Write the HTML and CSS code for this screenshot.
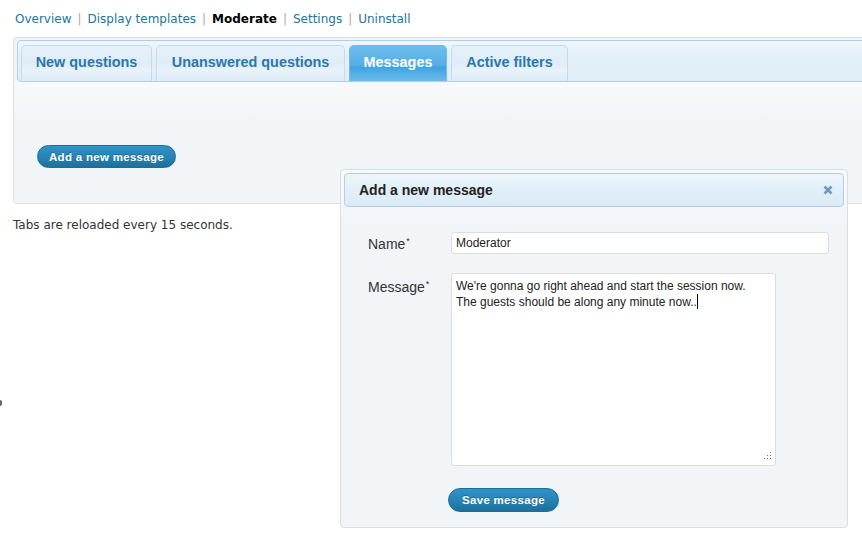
FILE: index.html
```html
<!DOCTYPE html>
<html>
<head>
<meta charset="utf-8">
<link rel="stylesheet" href="styles.css">
</head>
<body>
<div class="page">
  <nav class="subnav">
    <a href="#">Overview</a><span class="sep">|</span><a href="#">Display templates</a><span class="sep">|</span><strong>Moderate</strong><span class="sep">|</span><a href="#">Settings</a><span class="sep">|</span><a href="#">Uninstall</a>
  </nav>
  <div class="tabs">
    <ul class="tab-nav">
      <li class="tab tab-new">New questions</li>
      <li class="tab tab-unanswered">Unanswered questions</li>
      <li class="tab tab-messages active">Messages</li>
      <li class="tab tab-filters">Active filters</li>
    </ul>
    <div class="tab-panel">
      <button class="btn btn-add">Add a new message</button>
    </div>
  </div>
  <p class="note">Tabs are reloaded every 15 seconds.</p>
</div>

<span class="edge-dot"></span>

<div class="dialog">
  <div class="dialog-title">
    <span>Add a new message</span>
    <svg class="close" width="10" height="10" viewBox="0 0 10 10"><path d="M1.5 1.5 L8.5 8.5 M8.5 1.5 L1.5 8.5" stroke="#6d9bc3" stroke-width="2.6" stroke-linecap="butt"/></svg>
  </div>
  <div class="dialog-body">
    <div class="row">
      <label class="label">Name<sup>*</sup></label>
      <div class="input">Moderator</div>
    </div>
    <div class="row">
      <label class="label label-msg">Message<sup>*</sup></label>
      <div class="textarea">We're gonna go right ahead and start the session now.<br>The guests should be along any minute now..<span class="caret"></span>
        <svg class="grip" width="10" height="10" viewBox="0 0 10 10" fill="#777"><rect x="8" y="0" width="1" height="1"/><rect x="8" y="3" width="1" height="1"/><rect x="5" y="3" width="1" height="1"/><rect x="8" y="6" width="1" height="1"/><rect x="5" y="6" width="1" height="1"/><rect x="2" y="6" width="1" height="1"/></svg>
      </div>
    </div>
    <div class="row actions">
      <button class="btn btn-save">Save message</button>
    </div>
  </div>
</div>
</body>
</html>
```
FILE: styles.css
```css
html, body {
  margin: 0;
  padding: 0;
  background: #fff;
  overflow: hidden;
  width: 862px;
  height: 547px;
}
body {
  font-family: "DejaVu Sans", sans-serif;
  font-size: 12px;
  color: #333;
  position: relative;
}
.page {
  padding-left: 13px;
}
.subnav {
  padding: 11px 0 0 2px;
  line-height: 16px;
  height: 16px;
  white-space: nowrap;
}
.subnav a {
  color: #21759b;
  text-decoration: none;
}
.subnav strong {
  color: #000;
  font-weight: bold;
}
.subnav .sep {
  color: #aaa;
  margin: 0 6px;
}
.tabs {
  margin-top: 10px;
  margin-right: -20px;
  border: 1px solid #dddddd;
  border-radius: 4px;
  padding: 2px 3px 0 3px;
  background: #f2f5f8;
}
.tab-nav {
  list-style: none;
  margin: 0;
  padding: 4px 3px 0 3px;
  height: 36px;
  display: flex;
  gap: 4px;
  border: 1px solid #aed0ea;
  border-radius: 4px;
  background: linear-gradient(#f1f7fc 0%, #e4f0f9 35%, #deedf7 100%);
}
.tab {
  font-family: "Liberation Sans", Arial, sans-serif;
  font-weight: bold;
  font-size: 14.4px;
  color: #2779aa;
  height: 36px;
  box-sizing: border-box;
  margin-bottom: -1px;
  padding-top: 8px;
  text-align: center;
  border: 1px solid #c5dbec;
  border-bottom: none;
  border-radius: 5px 5px 0 0;
  background: linear-gradient(#e6f1fa 0%, #dfedf8 50%, #e8f2fa 70%, #ddebf7 100%);
}
.tab-new { width: 131px; }
.tab-unanswered { width: 189px; }
.tab-messages { width: 98px; }
.tab-filters { width: 117px; }
.tab.active {
  color: #fff;
  border-color: #79b7e7;
  background: linear-gradient(#6fbdec 0%, #55aee6 55%, #3fa3e0 60%, #6bbbe9 100%);
}
.tab-panel {
  height: 121px;
  box-sizing: border-box;
  padding: 63px 0 0 23px;
  background: linear-gradient(#f8f9fb, #f2f5f8 40px);
  margin: 0 -3px;
  border-radius: 0 0 4px 4px;
}
.btn {
  font-family: "Liberation Sans", Arial, sans-serif;
  font-weight: bold;
  font-size: 11.5px;
  letter-spacing: 0.3px;
  color: #fff;
  border: 1px solid #1e6d97;
  border-radius: 12px;
  background: linear-gradient(#2f94c7 0%, #2684b6 50%, #1f6f9b 100%);
  text-shadow: 0 -1px 0 rgba(0,0,0,0.25);
  cursor: pointer;
  display: block;
  margin: 0;
}
.btn-add {
  width: 139px;
  height: 23px;
  padding: 0;
}
.note {
  margin: 13px 0 0 0;
  line-height: 16px;
}
.edge-dot {
  position: absolute;
  left: -2px;
  top: 400px;
  width: 4px;
  height: 6px;
  border-radius: 3px;
  background: #666;
}
.dialog {
  position: absolute;
  left: 340px;
  top: 169px;
  width: 508px;
  height: 359px;
  box-sizing: border-box;
  border: 1px solid #dddddd;
  border-radius: 4px;
  background: linear-gradient(#f8f9fb, #f2f5f8 60px);
  padding: 3px;
  font-family: "Liberation Sans", Arial, sans-serif;
}
.dialog-title {
  height: 34px;
  box-sizing: border-box;
  border: 1px solid #aed0ea;
  border-radius: 4px;
  background: linear-gradient(#eef6fc 0%, #e3f0f9 40%, #dbeaf6 100%);
  display: flex;
  align-items: center;
  justify-content: space-between;
  padding: 0 10px 0 14px;
  font-weight: bold;
  font-size: 14px;
  color: #222;
}
.dialog-body {
  padding: 25px 0 0 24px;
  display: flex;
  flex-direction: column;
}
.row {
  display: flex;
  align-items: flex-start;
}
.label {
  width: 83px;
  font-size: 14px;
  color: #333;
  padding-top: 4px;
  line-height: 16px;
}
.label-msg {
  padding-top: 6px;
}
.label sup {
  font-size: 9px;
  vertical-align: top;
  position: relative;
  top: -3px;
  margin-left: 1px;
}
.input {
  width: 378px;
  height: 22px;
  box-sizing: border-box;
  border: 1px solid #dddddd;
  border-radius: 3px;
  background: #fff;
  font-size: 12px;
  color: #222;
  padding: 3px 4px;
  line-height: 14px;
}
.row + .row {
  margin-top: 19px;
}
.textarea {
  position: relative;
  width: 325px;
  height: 193px;
  box-sizing: border-box;
  border: 1px solid #dddddd;
  border-radius: 3px;
  background: #fff;
  font-size: 12px;
  color: #222;
  padding: 4px 4px;
  line-height: 16px;
}
.caret {
  display: inline-block;
  width: 1px;
  height: 15px;
  background: #000;
  vertical-align: -3px;
}
.grip {
  position: absolute;
  right: 3px;
  bottom: 3px;
}
.row.actions {
  margin-top: 22px;
  padding-left: 80px;
}
.btn-save {
  width: 111px;
  height: 24px;
  padding: 0;
}
```
